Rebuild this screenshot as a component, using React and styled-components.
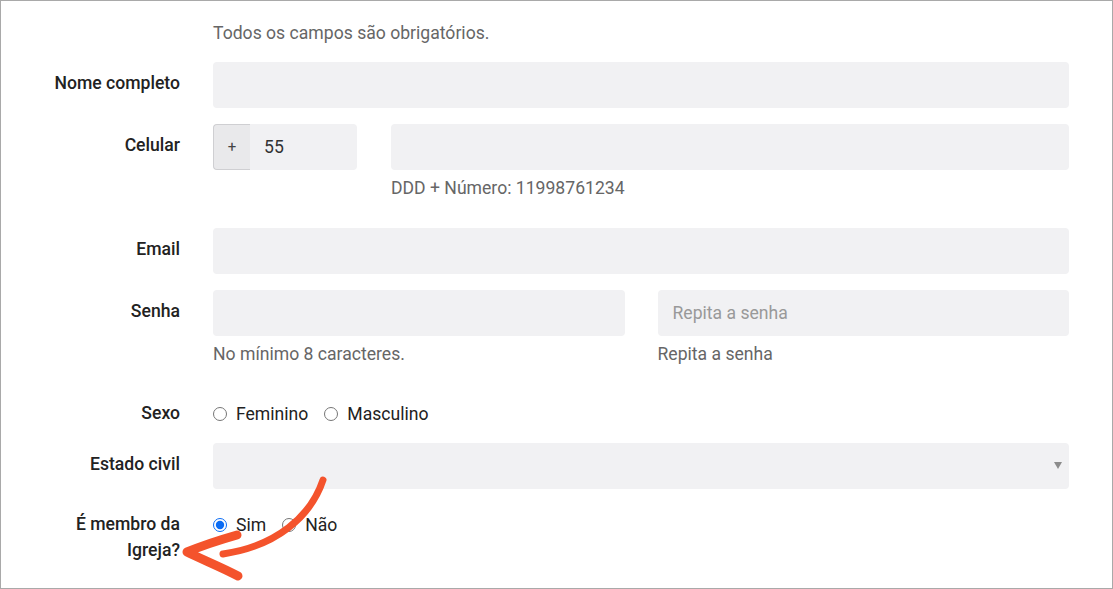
import React from 'react';
import styled, { createGlobalStyle } from 'styled-components';

const GlobalStyle = createGlobalStyle`
  html, body {
    margin: 0;
    padding: 0;
    background: #fff;
  }
  * {
    box-sizing: border-box;
  }
`;

const Frame = styled.div`
  position: relative;
  width: 1113px;
  height: 589px;
  border: 1px solid #a9a9a9;
  padding: 20px 43px 0 0;
  overflow: hidden;
  font-family: Roboto, "Liberation Sans", sans-serif;
  font-size: 17.6px;
  color: #222;
`;

const Form = styled.form`
  display: grid;
  grid-template-columns: 179px 1fr;
  column-gap: 33px;
  align-items: start;
`;

const Intro = styled.p`
  grid-column: 2;
  margin: 0 0 17px;
  line-height: 24px;
  color: #666;
`;

const Label = styled.label`
  text-align: right;
  font-weight: 500;
  line-height: 26px;
  padding: ${p => (p.$inline ? '6px' : '8px')} 0 0 40px;
  color: #222;
`;

const Field = styled.div`
  margin-bottom: 16px;
`;

const Input = styled.input`
  display: block;
  width: 100%;
  height: 46px;
  border: none;
  border-radius: 4px;
  background: #f1f1f3;
  padding: 0 15px;
  font: inherit;
  color: #333;
  outline: none;
  &::placeholder {
    color: #999;
  }
`;

const Hint = styled.div`
  margin: 6px 0 12px;
  line-height: 24px;
  color: #666;
`;

const Pair = styled.div`
  display: grid;
  grid-template-columns: ${p => p.$cols};
  column-gap: ${p => p.$gap}px;
  margin-bottom: 16px;
`;

const PrefixGroup = styled.div`
  display: flex;
  height: 46px;
`;

const Prefix = styled.span`
  width: 37px;
  display: flex;
  align-items: center;
  justify-content: center;
  background: #e9e9eb;
  border: 1px solid #cfcfd2;
  border-right: none;
  border-radius: 4px 0 0 4px;
  color: #444;
  font-size: 15px;
`;

const PrefixInput = styled(Input)`
  flex: 1;
  border-radius: 0 4px 4px 0;
  padding-left: 14px;
`;

const SelectBox = styled.div`
  position: relative;
  height: 46px;
  border-radius: 4px;
  background: #f1f1f3;
`;

const Caret = styled.span`
  position: absolute;
  right: 7px;
  top: 19px;
  width: 0;
  height: 0;
  border-left: 4px solid transparent;
  border-right: 4px solid transparent;
  border-top: 7px solid #8c8c8c;
`;

const Radios = styled.div`
  display: flex;
  align-items: center;
  gap: 16px;
  padding: 7px 0 0;
  height: 33px;
  line-height: 26px;
  margin-bottom: ${p => (p.$last ? '0' : '16px')};
`;

const Option = styled.label`
  display: flex;
  align-items: center;
  gap: 9px;
  color: #222;
`;

const Radio = styled.input`
  margin: 0;
  width: 14px;
  height: 14px;
  accent-color: #0b6cf4;
`;

const Annotation = styled.svg`
  position: absolute;
  left: 0;
  top: 0;
  pointer-events: none;
`;

const ArrowNote = () => (
  <Annotation width="1113" height="589" viewBox="0 0 1113 589">
    <g fill="none" stroke="#f4532c" strokeLinecap="round" strokeLinejoin="round">
      <path d="M322 479 C 310 515, 276 545, 222 553" strokeWidth="7" />
      <path d="M236 534 C 215 540, 198 546, 186 551 C 200 558, 220 566, 237 575" strokeWidth="9" />
    </g>
  </Annotation>
);

export default function App() {
  return (
    <>
      <GlobalStyle />
      <Frame>
        <Form onSubmit={e => e.preventDefault()}>
          <Intro>Todos os campos são obrigatórios.</Intro>

          <Label>Nome completo</Label>
          <Field>
            <Input />
          </Field>

          <Label>Celular</Label>
          <Pair $cols="144px 1fr" $gap={34}>
            <PrefixGroup>
              <Prefix>+</Prefix>
              <PrefixInput defaultValue="55" />
            </PrefixGroup>
            <div>
              <Input />
              <Hint>DDD + Número: 11998761234</Hint>
            </div>
          </Pair>

          <Label>Email</Label>
          <Field>
            <Input type="email" />
          </Field>

          <Label>Senha</Label>
          <Pair $cols="1fr 1fr" $gap={33}>
            <div>
              <Input type="password" />
              <Hint>No mínimo 8 caracteres.</Hint>
            </div>
            <div>
              <Input type="password" placeholder="Repita a senha" />
              <Hint>Repita a senha</Hint>
            </div>
          </Pair>

          <Label $inline>Sexo</Label>
          <Radios>
            <Option><Radio type="radio" name="sexo" />Feminino</Option>
            <Option><Radio type="radio" name="sexo" />Masculino</Option>
          </Radios>

          <Label>Estado civil</Label>
          <Field>
            <SelectBox>
              <Caret />
            </SelectBox>
          </Field>

          <Label $inline>É membro da Igreja?</Label>
          <Radios $last>
            <Option><Radio type="radio" name="membro" defaultChecked />Sim</Option>
            <Option><Radio type="radio" name="membro" />Não</Option>
          </Radios>
        </Form>
        <ArrowNote />
      </Frame>
    </>
  );
}
